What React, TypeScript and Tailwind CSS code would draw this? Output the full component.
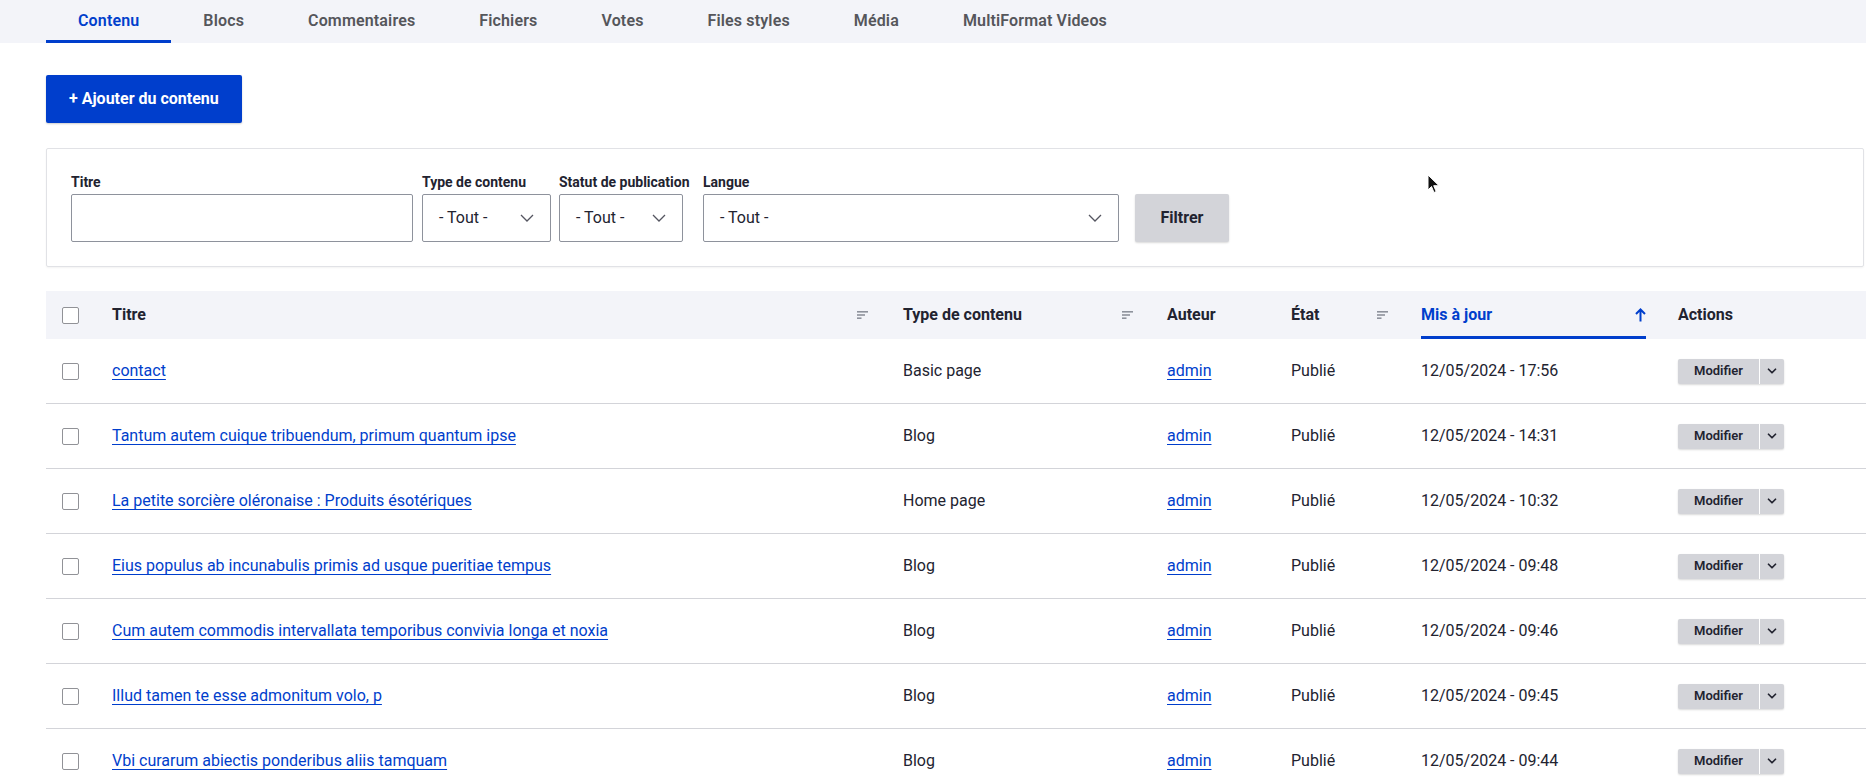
import { ChevronDown } from "lucide-react";

const tabs = ["Contenu", "Blocs", "Commentaires", "Fichiers", "Votes", "Files styles", "Média", "MultiFormat Videos"];

const rows = [
  { title: "contact", type: "Basic page", date: "12/05/2024 - 17:56" },
  { title: "Tantum autem cuique tribuendum, primum quantum ipse", type: "Blog", date: "12/05/2024 - 14:31" },
  { title: "La petite sorcière oléronaise : Produits ésotériques", type: "Home page", date: "12/05/2024 - 10:32" },
  { title: "Eius populus ab incunabulis primis ad usque pueritiae tempus", type: "Blog", date: "12/05/2024 - 09:48" },
  { title: "Cum autem commodis intervallata temporibus convivia longa et noxia", type: "Blog", date: "12/05/2024 - 09:46" },
  { title: "Illud tamen te esse admonitum volo, p", type: "Blog", date: "12/05/2024 - 09:45" },
  { title: "Vbi curarum abiectis ponderibus aliis tamquam", type: "Blog", date: "12/05/2024 - 09:44" },
];

const grid = "grid grid-cols-[50px_791px_264px_124px_130px_257px_1fr]";

const SortIcon = () => (
  <svg width="11" height="8" viewBox="0 0 11 8" className="shrink-0">
    <rect x="0" y="0" width="11" height="1.6" fill="#8e929c" />
    <rect x="0" y="3.2" width="8" height="1.6" fill="#8e929c" />
    <rect x="0" y="6.4" width="4.5" height="1.6" fill="#8e929c" />
  </svg>
);

const SelectChevron = () => (
  <svg width="14" height="8" viewBox="0 0 14 8" fill="none">
    <path d="M1 1l6 6 6-6" stroke="#545560" strokeWidth="1.3" />
  </svg>
);

const Checkbox = () => (
  <div className="w-[17px] h-[17px] rounded-[2px] border border-[#919297] bg-white" />
);

const Select = ({ width }: { width: string }) => (
  <div className={`${width} h-[48px] border border-[#8e929c] rounded-[2px] flex items-center justify-between pl-4 pr-[16px] text-[16px] text-[#222330]`}>
    <span>- Tout -</span>
    <SelectChevron />
  </div>
);

export default function App() {
  return (
    <div className="relative w-full h-[781px] overflow-hidden bg-white text-[#222330] font-['Roboto',sans-serif]">
      {/* tabs */}
      <nav className="h-[43px] bg-[#f3f4f9] pl-[46px] flex">
        {tabs.map((tab, i) => (
          <div
            key={tab}
            className={`px-8 flex items-center text-[16px] tracking-[0.15px] font-semibold pt-[1px] border-b-[3px] ${
              i === 0 ? "text-[#003ecc] border-[#003ecc]" : "text-[#55565b] border-transparent"
            }`}
          >
            {tab}
          </div>
        ))}
      </nav>

      <div className="pl-[46px]">
        <div className="pt-8">
          <button className="h-[48px] px-[23px] bg-[#003ecc] text-white text-[16px] font-bold rounded-[2px] shadow-[0_1px_2px_rgba(0,0,0,0.2)]">
            + Ajouter du contenu
          </button>
        </div>

        {/* filters */}
        <div className="mt-[25px] w-[1818px] border border-[#e1e2e6] rounded-[2px] p-6 shadow-[0_1px_2px_rgba(0,0,0,0.05)]">
          <div className="flex items-end">
            <div className="flex flex-col mr-[9px]">
              <label className="text-[14px] font-bold mb-[3px] leading-[18px]">Titre</label>
              <div className="w-[342px] h-[48px] border border-[#8e929c] rounded-[2px]" />
            </div>
            <div className="flex flex-col w-[129px] mr-[8px]">
              <label className="text-[14px] font-bold mb-[3px] leading-[18px] whitespace-nowrap">Type de contenu</label>
              <Select width="w-[129px]" />
            </div>
            <div className="flex flex-col w-[135px] mr-[9px]">
              <label className="text-[14px] font-bold mb-[3px] leading-[18px] whitespace-nowrap">Statut de publication</label>
              <Select width="w-[124px]" />
            </div>
            <div className="flex flex-col mr-4">
              <label className="text-[14px] font-bold mb-[3px] leading-[18px]">Langue</label>
              <Select width="w-[416px]" />
            </div>
            <button className="h-[48px] w-[94px] bg-[#d3d4d9] rounded-[2px] text-[16px] font-bold text-[#222330] shadow-[0_1px_2px_rgba(0,0,0,0.15)]">
              Filtrer
            </button>
          </div>
        </div>

        {/* table */}
        <div className="mt-[24px] w-[1820px]">
          <div className={`${grid} h-[48px] bg-[#f3f4f9] text-[16px] font-bold`}>
            <div className="pl-4 flex items-center"><Checkbox /></div>
            <div className="pl-4 pr-[19px] flex items-center justify-between"><span>Titre</span><SortIcon /></div>
            <div className="pl-4 pr-[18px] flex items-center justify-between"><span>Type de contenu</span><SortIcon /></div>
            <div className="pl-4 flex items-center"><span>Auteur</span></div>
            <div className="pl-4 pr-[17px] flex items-center justify-between"><span>État</span><SortIcon /></div>
            <div className="px-4 flex">
              <div className="flex-1 flex items-center justify-between border-b-[3px] border-[#003ecc] text-[#003ecc] pt-[3px]">
                <span>Mis à jour</span>
                <svg width="11" height="14" viewBox="0 0 11 14" fill="none">
                  <path d="M5.5 13.5V1.5M1 6l4.5-4.5L10 6" stroke="#003ecc" strokeWidth="2" />
                </svg>
              </div>
            </div>
            <div className="pl-4 flex items-center"><span>Actions</span></div>
          </div>

          {rows.map((row) => (
            <div key={row.title} className={`${grid} h-[65px] border-b border-[#d3d4d9] text-[16px]`}>
              <div className="pl-4 flex items-center"><Checkbox /></div>
              <div className="pl-4 flex items-center">
                <a className="text-[#003ecc] underline underline-offset-[3px] decoration-[1px]">{row.title}</a>
              </div>
              <div className="pl-4 flex items-center">{row.type}</div>
              <div className="pl-4 flex items-center">
                <a className="text-[#003ecc] underline underline-offset-[3px] decoration-[1px]">admin</a>
              </div>
              <div className="pl-4 flex items-center">Publié</div>
              <div className="pl-4 flex items-center">{row.date}</div>
              <div className="pl-4 flex items-center">
                <div className="flex h-[25px] rounded-[2px] bg-[#d3d4d9] shadow-[0_1px_2px_rgba(0,0,0,0.15)]">
                  <span className="w-[82px] flex items-center justify-center text-[13px] font-semibold border-r border-white">
                    Modifier
                  </span>
                  <span className="w-[24px] flex items-center justify-center">
                    <ChevronDown size={14} strokeWidth={3} color="#222330" />
                  </span>
                </div>
              </div>
            </div>
          ))}
        </div>
      </div>

      {/* mouse pointer */}
      <svg className="absolute left-[1427px] top-[174px]" width="13" height="20" viewBox="0 0 13 20">
        <path d="M1 1v15l3.5-3.5 2.5 6 2.2-1-2.5-5.8H12z" fill="#111" stroke="#fff" strokeWidth="1" />
      </svg>
    </div>
  );
}
